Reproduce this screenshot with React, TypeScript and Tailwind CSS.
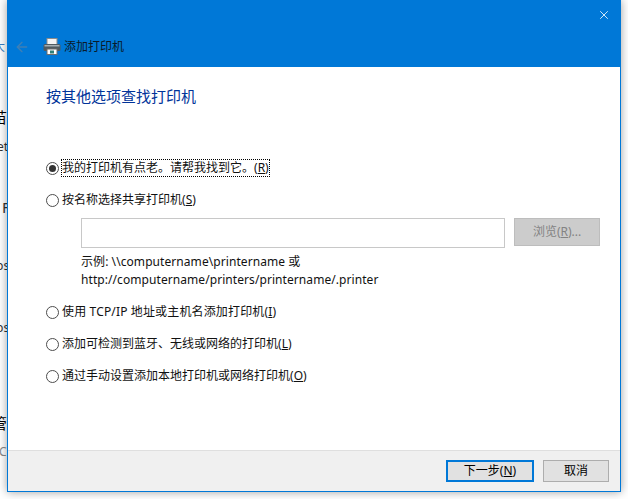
import { ArrowLeft, X } from 'lucide-react'

const cjk = "font-['Noto_Sans','Noto_Sans_CJK_SC',sans-serif]"

function Radio({ checked }: { checked?: boolean }) {
  return (
    <span className="w-[13px] h-[13px] shrink-0 rounded-full border border-[#4d4d4d] bg-white flex items-center justify-center">
      {checked && <span className="w-[7px] h-[7px] rounded-full bg-[#333333]" />}
    </span>
  )
}

function Option({ label, mnemonic, checked, focus, wide }: { label: string; mnemonic: string; checked?: boolean; focus?: boolean; wide?: boolean }) {
  return (
    <div className="flex items-center h-[16px] gap-[3px]">
      <Radio checked={checked} />
      <span className={`text-[12px] leading-[16px] text-[#111111] whitespace-nowrap ${wide ? 'tracking-[0.15px]' : ''} ${focus ? 'outline-1 outline-dotted outline-black' : ''}`}>
        {label}(<span className="underline">{mnemonic}</span>)
      </span>
    </div>
  )
}

function Printer() {
  return (
    <svg width="18" height="17" viewBox="0 0 18 17">
      <rect x="4" y="0.5" width="10" height="6" fill="#f4f4f4" stroke="#8a8a8a" />
      <rect x="0.5" y="6" width="17" height="7" rx="1.5" fill="#4f5a60" />
      <rect x="1.5" y="7" width="15" height="1.5" fill="#a4aeb3" />
      <rect x="4" y="11" width="10" height="5.5" fill="#ffffff" stroke="#6d6d6d" />
      <rect x="7" y="12.5" width="4" height="3" fill="#2f7f78" />
    </svg>
  )
}

export default function App() {
  return (
    <div className={`w-[628px] h-[499px] overflow-hidden relative bg-white ${cjk}`}>
      {/* bits of the window behind */}
      <div className="absolute left-0 top-0 w-[7px] h-[499px] overflow-hidden text-[12px] text-black">
        <span className="absolute left-[-7px] top-[38px] text-[#3a7fc4]">大</span>
        <span className="absolute left-[-8px] top-[106px] text-[15px]">苗</span>
        <span className="absolute left-[-3px] top-[138px] text-[#333333]">et</span>
        <span className="absolute left-[2px] top-[199px] text-[15px] leading-[16px] text-[#333333]">F</span>
        <span className="absolute left-[-4px] top-[257px] text-[#333333]">ps</span>
        <span className="absolute left-[-4px] top-[319px] text-[#333333]">ps</span>
        <span className="absolute left-[-8px] top-[412px] text-[15px]">管</span>
        <span className="absolute left-[-1px] top-[443px] text-[#888888]">C</span>
      </div>

      <div className="absolute left-[7px] top-0 w-[614px] h-[492px] border border-t-0 border-[#0078d7] bg-white flex flex-col shadow-[0_0_9px_rgba(0,0,0,0.38)]">
        <div className="h-[67px] shrink-0 bg-[#0078d7] relative">
          <X className="absolute right-[9px] top-[8px] text-white" size={14} strokeWidth={1.4} />
          <div className="flex items-center pt-[38px] pl-[6px]">
            <ArrowLeft size={16} strokeWidth={2} className="text-[#3f7fb5]" />
            <div className="ml-[13px]"><Printer /></div>
            <span className="ml-[3px] text-[12px] leading-[16px] text-[#0a1a2a]">添加打印机</span>
          </div>
        </div>

        <div className="flex-1 pl-[38px] pr-[20px]">
          <h1 className="mt-[19px] text-[15px] leading-[20px] font-normal text-[#003399]">按其他选项查找打印机</h1>

          <div className="mt-[54px]">
            <Option label="我的打印机有点老。请帮我找到它。" mnemonic="R" checked focus />
          </div>
          <div className="mt-[16px]">
            <Option label="按名称选择共享打印机" mnemonic="S" />
          </div>
          <div className="mt-[10px] ml-[35px] flex gap-[9px]">
            <div className="w-[425px] h-[30px] border border-[#c8c8c8] bg-white" />
            <div className="w-[86px] h-[28px] border border-[#bdbdbd] bg-[#cccccc] flex items-center justify-center text-[12px] text-[#838383]">
              <span>浏览(<span className="underline">R</span>)...</span>
            </div>
          </div>
          <p className="mt-[5px] ml-[35px] text-[12px] leading-[18px] tracking-[0.07px] text-[#111111] whitespace-nowrap">
            示例: \\computername\printername 或<br />
            http://computername/printers/printername/.printer
          </p>
          <div className="mt-[15px]">
            <Option label="使用 TCP/IP 地址或主机名添加打印机" mnemonic="I" wide />
          </div>
          <div className="mt-[16px]">
            <Option label="添加可检测到蓝牙、无线或网络的打印机" mnemonic="L" />
          </div>
          <div className="mt-[16px]">
            <Option label="通过手动设置添加本地打印机或网络打印机" mnemonic="O" />
          </div>
        </div>

        <div className="h-[41px] shrink-0 bg-[#f0f0f0] border-t border-[#dfdfdf] flex justify-end items-start pt-[9px] pr-[11px] gap-[9px]">
          <button className="w-[88px] h-[22px] border-2 border-[#0078d7] bg-[#e1e1e1] text-[12px] leading-none text-black">
            下一步(<span className="underline">N</span>)
          </button>
          <button className="w-[66px] h-[22px] border border-[#adadad] bg-[#e1e1e1] text-[12px] leading-none text-black">取消</button>
        </div>
      </div>
    </div>
  )
}
